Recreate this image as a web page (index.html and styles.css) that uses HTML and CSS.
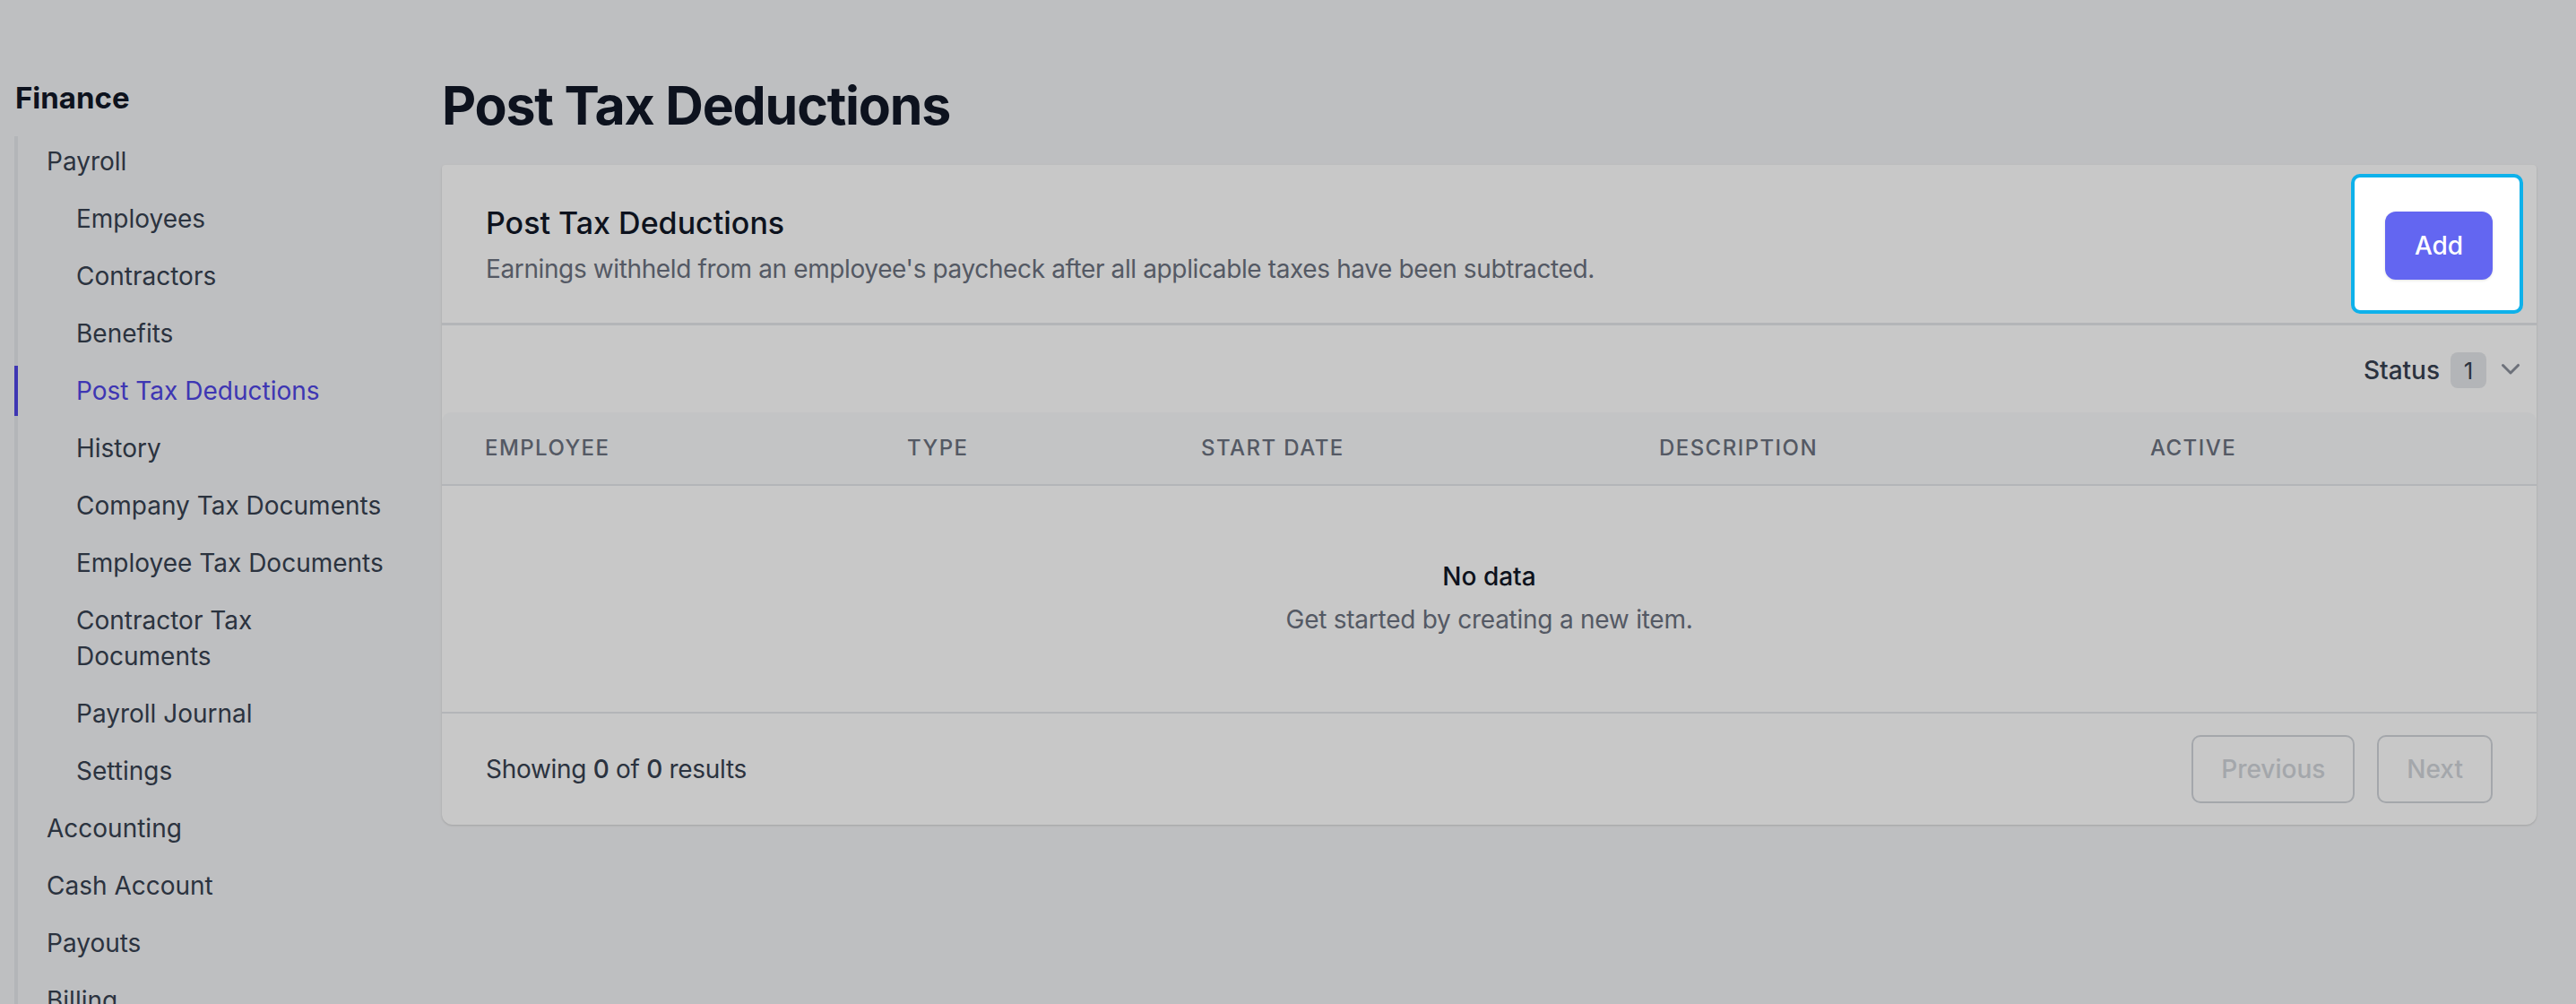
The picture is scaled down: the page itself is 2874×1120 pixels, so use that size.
FILE: index.html
```html
<!DOCTYPE html>
<html lang="en">
<head>
    <meta charset="UTF-8">
    <meta name="viewport" content="width=device-width, initial-scale=1.0">
    <title>Post Tax Deductions - Finance</title>
    <link rel="stylesheet" href="styles.css">
</head>
<body>
    <div class="layout">
        <!-- Left navigation -->
        <aside class="sidebar">
            <h2 class="nav-title">Finance</h2>
            <ul class="nav-tree">
                <li>
                    <a class="nav-link">Payroll</a>
                    <ul>
                        <li><a class="nav-link sub">Employees</a></li>
                        <li><a class="nav-link sub">Contractors</a></li>
                        <li><a class="nav-link sub">Benefits</a></li>
                        <li><a class="nav-link sub active">Post Tax Deductions</a></li>
                        <li><a class="nav-link sub">History</a></li>
                        <li><a class="nav-link sub">Company Tax Documents</a></li>
                        <li><a class="nav-link sub">Employee Tax Documents</a></li>
                        <li><a class="nav-link sub">Contractor Tax Documents</a></li>
                        <li><a class="nav-link sub">Payroll Journal</a></li>
                        <li><a class="nav-link sub">Settings</a></li>
                    </ul>
                </li>
                <li><a class="nav-link">Accounting</a></li>
                <li><a class="nav-link">Cash Account</a></li>
                <li><a class="nav-link">Payouts</a></li>
                <li><a class="nav-link">Billing</a></li>
            </ul>
        </aside>

        <main class="content">
            <h1>Post Tax Deductions</h1>

            <section class="card">
                <div class="card-header">
                    <div>
                        <h3>Post Tax Deductions</h3>
                        <p>Earnings withheld from an employee's paycheck after all applicable taxes have been subtracted.</p>
                    </div>
                    <div class="spotlight">
                        <button class="btn-primary">Add</button>
                    </div>
                </div>

                <div class="filters">
                    <span class="filter-label">Status</span>
                    <span class="badge">1</span>
                    <svg class="chevron" viewBox="0 0 20 20" fill="currentColor">
                        <path fill-rule="evenodd" d="M5.22 8.22a.75.75 0 0 1 1.06 0L10 11.94l3.72-3.72a.75.75 0 1 1 1.06 1.06l-4.25 4.25a.75.75 0 0 1-1.06 0L5.22 9.28a.75.75 0 0 1 0-1.06Z"/>
                    </svg>
                </div>

                <table class="data-table">
                    <colgroup>
                        <col style="width: 471px">
                        <col style="width: 328px">
                        <col style="width: 511px">
                        <col style="width: 548px">
                        <col>
                    </colgroup>
                    <thead>
                        <tr>
                            <th>Employee</th>
                            <th>Type</th>
                            <th>Start Date</th>
                            <th>Description</th>
                            <th>Active</th>
                        </tr>
                    </thead>
                    <tbody>
                        <tr>
                            <td colspan="5" class="empty">
                                <div class="empty-title">No data</div>
                                <div class="empty-text">Get started by creating a new item.</div>
                            </td>
                        </tr>
                    </tbody>
                </table>

                <div class="card-footer">
                    <span class="results">Showing <b>0</b> of <b>0</b> results</span>
                    <div class="pager">
                        <button class="btn-page" disabled>Previous</button>
                        <button class="btn-page" disabled>Next</button>
                    </div>
                </div>
            </section>
        </main>
    </div>

    <!-- tour overlay -->
    <div class="overlay"></div>
</body>
</html>
```

FILE: styles.css
```css
* {
    box-sizing: border-box;
}
body {
    margin: 0;
    background: #f3f4f6;
    font-family: Inter, "Noto Sans", sans-serif;
    color: #111827;
}
.layout {
    display: flex;
    min-height: 100vh;
}

/* sidebar */
.sidebar {
    width: 440px;
    flex-shrink: 0;
    padding: 89px 0 0 16px;
}
.nav-title {
    margin: 0 0 23px 1px;
    font-size: 33px;
    line-height: 40px;
    font-weight: 700;
    color: #111827;
}
.nav-tree,
.nav-tree ul {
    list-style: none;
    margin: 0;
    padding: 0;
}
.nav-tree {
    border-left: 4px solid #e5e7eb;
}
.nav-link {
    display: block;
    padding: 8px 0 8px 32px;
    margin-bottom: 8px;
    font-size: 28px;
    line-height: 40px;
    color: #374151;
    cursor: pointer;
}
.nav-link.sub {
    padding-left: 65px;
    padding-right: 10px;
}
.nav-link.active {
    margin-left: -4px;
    border-left: 4px solid #4f46e5;
    color: #4f46e5;
}

/* main */
.content {
    flex: 1;
    padding: 82px 44px 40px 53px;
}
h1 {
    margin: 0 0 30px;
    font-size: 59px;
    line-height: 72px;
    font-weight: 700;
    letter-spacing: -1.2px;
    color: #111827;
}
.card {
    background: #fff;
    border-radius: 4px 4px 12px 12px;
    box-shadow: 0 1px 3px rgba(0, 0, 0, 0.1), 0 1px 2px rgba(0, 0, 0, 0.06);
}
.card-header {
    display: flex;
    justify-content: space-between;
    align-items: center;
    padding: 43px 49px 40px;
    border-bottom: 3px solid #e5e7eb;
}
.card-header h3 {
    margin: 0;
    font-size: 34px;
    line-height: 44px;
    font-weight: 500;
    color: #111827;
}
.card-header p {
    margin: 9px 0 0;
    font-size: 28px;
    line-height: 40px;
    letter-spacing: -0.38px;
    color: #6b7280;
}
.spotlight {
    position: relative;
    z-index: 11;
}
.spotlight::before {
    content: "";
    position: absolute;
    top: -42px;
    bottom: -38px;
    left: -38px;
    right: -34px;
    background: #fff;
    border: 4px solid #0eb1ea;
    border-radius: 10px;
    z-index: -1;
}
.btn-primary {
    width: 120px;
    height: 76px;
    border: none;
    border-radius: 12px;
    background: #6366f1;
    color: #fff;
    font-family: inherit;
    font-size: 28px;
    font-weight: 500;
    box-shadow: 0 1px 3px rgba(0, 0, 0, 0.12);
    cursor: pointer;
}

.filters {
    display: flex;
    justify-content: flex-end;
    align-items: center;
    height: 97px;
    padding: 3px 9px 0 0;
}
.filter-label {
    font-size: 28px;
    font-weight: 500;
    color: #374151;
}
.badge {
    display: flex;
    align-items: center;
    justify-content: center;
    width: 40px;
    height: 40px;
    margin-left: 12px;
    border-radius: 8px;
    background: #e5e7eb;
    font-size: 26px;
    color: #374151;
}
.chevron {
    width: 40px;
    height: 40px;
    margin: -6px 0 0 7px;
    color: #8b919c;
}

.data-table {
    width: 100%;
    border-collapse: collapse;
    table-layout: fixed;
}
.data-table th {
    padding: 24px 48px;
    background: #f9fafb;
    border-bottom: 2px solid #e5e7eb;
    text-align: left;
    font-size: 24px;
    line-height: 32px;
    font-weight: 500;
    letter-spacing: 0.06em;
    text-transform: uppercase;
    color: #6b7280;
}
.data-table th:first-child {
    border-top-left-radius: 10px;
}
.data-table th:last-child {
    border-top-right-radius: 10px;
}
.empty {
    padding: 81px 0 83px;
    text-align: center;
    border-bottom: 2px solid #e5e7eb;
}
.empty-title {
    font-size: 28px;
    line-height: 40px;
    font-weight: 500;
    color: #111827;
}
.empty-text {
    margin-top: 8px;
    font-size: 28px;
    line-height: 40px;
    letter-spacing: -0.25px;
    color: #6b7280;
}

.card-footer {
    display: flex;
    justify-content: space-between;
    align-items: center;
    padding: 24px 49px;
}
.results {
    font-size: 28px;
    letter-spacing: -0.3px;
    color: #374151;
}
.results b {
    font-weight: 500;
}
.pager {
    display: flex;
    gap: 25px;
}
.btn-page {
    height: 76px;
    padding: 0 31px;
    border: 2px solid #d1d5db;
    border-radius: 10px;
    background: #fff;
    color: #d1d5db;
    font-family: inherit;
    font-size: 28px;
    font-weight: 500;
}

.overlay {
    position: fixed;
    inset: 0;
    background: rgba(0, 0, 0, 0.216);
    z-index: 10;
}
```
